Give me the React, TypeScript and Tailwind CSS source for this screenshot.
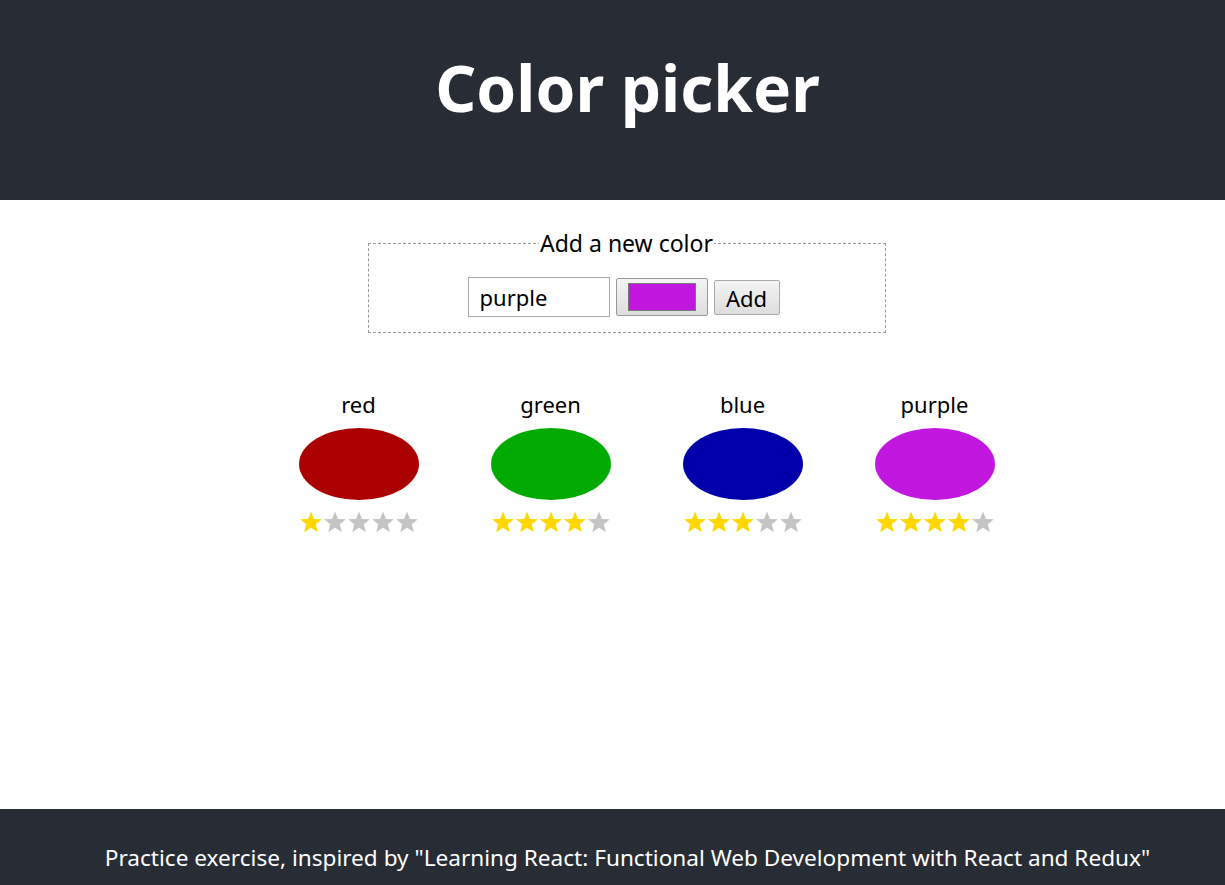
import { useState } from "react"

interface ColorItem {
  id: number
  title: string
  color: string
  rating: number
}

const initialColors: ColorItem[] = [
  { id: 1, title: "red", color: "#aa0000", rating: 1 },
  { id: 2, title: "green", color: "#00aa00", rating: 4 },
  { id: 3, title: "blue", color: "#0000aa", rating: 3 },
  { id: 4, title: "purple", color: "#c217de", rating: 4 },
]

const Star = ({ selected }: { selected: boolean }) => (
  <svg width="24" height="24" viewBox="0 0 24 24" className="block">
    <polygon
      points="12,1.5 14.9,9 23,9.3 16.7,14.3 18.9,22.3 12,17.8 5.1,22.3 7.3,14.3 1,9.3 9.1,9"
      fill={selected ? "#ffd700" : "#c4c4c4"}
    />
  </svg>
)

const ColorCard = ({ item }: { item: ColorItem }) => (
  <div className="flex flex-col items-center w-[120px]">
    <h3 className="text-[22px] leading-none mb-[13px]">{item.title}</h3>
    <div className="w-[120px] h-[72px] rounded-[50%]" style={{ backgroundColor: item.color }} />
    <div className="flex mt-[10px]">
      {[0, 1, 2, 3, 4].map(i => (
        <Star key={i} selected={i < item.rating} />
      ))}
    </div>
  </div>
)

const App = () => {
  const [colors] = useState<ColorItem[]>(initialColors)
  const [title, setTitle] = useState("purple")

  return (
    <div className="min-h-[885px] flex flex-col bg-white text-black font-['Noto_Sans',sans-serif]">
      <header className="h-[200px] bg-[#282c34] flex items-center justify-center pl-[30px]">
        <h1 className="text-white text-[64px] font-bold leading-none -mt-[24px]">Color picker</h1>
      </header>

      <main className="flex-1 flex flex-col items-center pt-[30px] pl-[28px]">
        <form onSubmit={e => e.preventDefault()}>
          <fieldset className="w-[518px] border border-dashed border-[#999] px-4 pb-[15px] flex justify-center gap-[6px]">
            <legend className="mx-auto px-[1px] text-[23px] leading-[26px]">Add a new color</legend>
            <input
              value={title}
              onChange={e => setTitle(e.target.value)}
              className="w-[142px] h-[40px] border border-[#aaa] px-[11px] text-[22px] outline-none mt-[21px]"
            />
            <div className="w-[92px] h-[38px] mt-[22px] border border-[#999] rounded-[2px] bg-gradient-to-b from-[#f4f4f4] to-[#dedede] flex items-center justify-center">
              <div className="w-[68px] h-[28px] bg-[#c217de] border border-[#777]" />
            </div>
            <button
              type="submit"
              className="w-[66px] h-[35px] mt-[24px] mr-[6px] border border-[#aaa] rounded-[2px] bg-gradient-to-b from-[#f4f4f4] to-[#dedede] text-[22px] leading-none"
            >
              Add
            </button>
          </fieldset>
        </form>

        <div className="flex gap-[72px] mt-[60px] ml-[40px]">
          {colors.map(c => (
            <ColorCard key={c.id} item={c} />
          ))}
        </div>
      </main>

      <footer className="h-[76px] bg-[#282c34] flex items-center justify-center text-white text-[22.6px] pt-[22px] pl-[30px]">
        Practice exercise, inspired by "Learning React: Functional Web Development with React and Redux"
      </footer>
    </div>
  )
}

export default App
